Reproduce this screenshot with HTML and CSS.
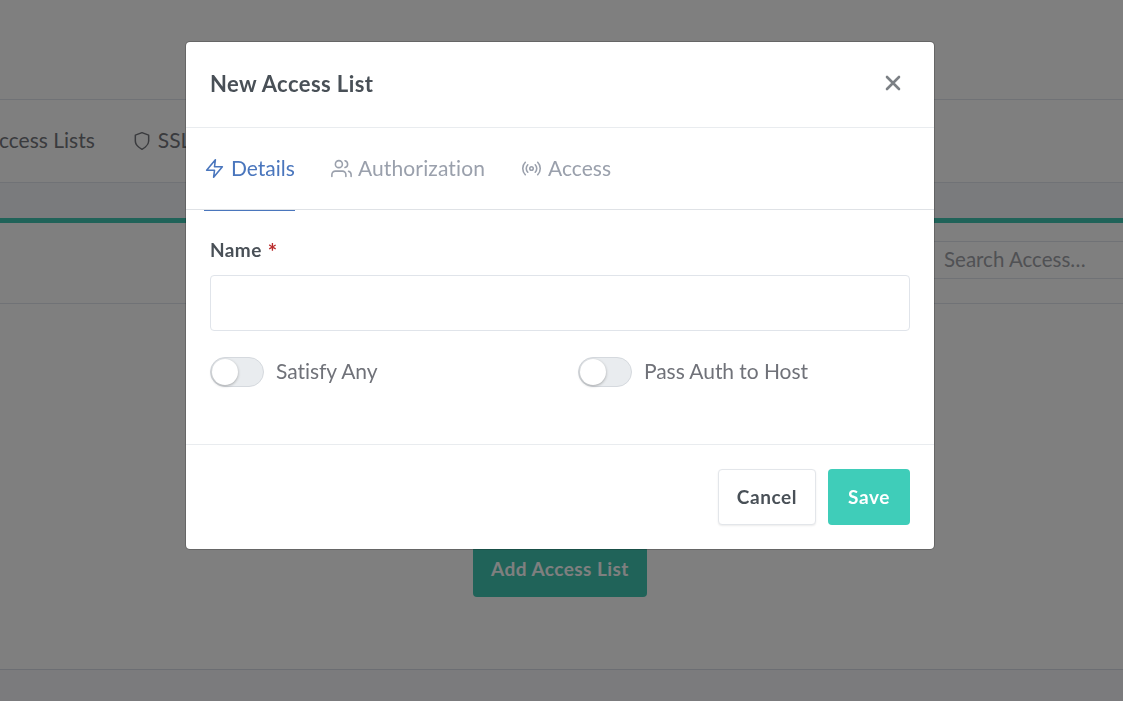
FILE: index.html
```html
<!DOCTYPE html>
<html lang="en">
<head>
<meta charset="utf-8">
<title>Access Lists</title>
<link rel="stylesheet" href="styles.css">
</head>
<body>
<div class="page">
  <header class="topbar"></header>
  <nav class="nav">
    <span class="nav-item nav-access">Access Lists</span>
    <span class="nav-item">
      <svg class="nav-icon" viewBox="0 0 24 24"><path d="M12 22s8-4 8-10V5l-8-3-8 3v7c0 6 8 10 8 10z"/></svg>
      SSL Certificates
    </span>
  </nav>
  <main class="content">
    <section class="card">
      <div class="card-head">
        <div class="search">Search Access…</div>
      </div>
      <div class="card-body">
        <span class="add-btn">Add Access List</span>
      </div>
    </section>
  </main>
  <footer class="footer"></footer>
</div>

<div class="backdrop">
  <div class="modal">
    <div class="modal-head">
      <h2 class="modal-title">New Access List</h2>
      <svg class="close" viewBox="0 0 24 24"><path d="M18 6 6 18M6 6l12 12"/></svg>
    </div>
    <div class="tabs">
      <div class="tab tab-active">
        <svg class="tab-icon" viewBox="0 0 24 24"><polygon points="13 2 3 14 12 14 11 22 21 10 12 10 13 2"/></svg>
        Details
      </div>
      <div class="tab tab-auth">
        <svg class="tab-icon" viewBox="0 0 24 24"><path d="M17 21v-2a4 4 0 0 0-4-4H5a4 4 0 0 0-4 4v2"/><circle cx="9" cy="7" r="4"/><path d="M23 21v-2a4 4 0 0 0-3-3.87"/><path d="M16 3.13a4 4 0 0 1 0 7.75"/></svg>
        Authorization
      </div>
      <div class="tab">
        <svg class="tab-icon" viewBox="0 0 24 24"><circle cx="12" cy="12" r="2"/><path d="M16.24 7.76a6 6 0 0 1 0 8.49m-8.48-.01a6 6 0 0 1 0-8.49m11.31-2.82a10 10 0 0 1 0 14.14m-14.14 0a10 10 0 0 1 0-14.14"/></svg>
        Access
      </div>
    </div>
    <div class="modal-body">
      <label class="field-label">Name <span class="req">*</span></label>
      <div class="input"></div>
      <div class="toggles">
        <div class="toggle-row"><span class="switch"><span class="knob"></span></span><span class="toggle-text">Satisfy Any</span></div>
        <div class="toggle-row"><span class="switch"><span class="knob"></span></span><span class="toggle-text">Pass Auth to Host</span></div>
      </div>
    </div>
    <div class="modal-foot">
      <span class="btn btn-cancel">Cancel</span>
      <span class="btn btn-save">Save</span>
    </div>
  </div>
</div>
</body>
</html>
```

FILE: styles.css
```css
* { box-sizing: border-box; }
html, body { margin: 0; height: 100%; overflow: hidden; }
body {
  font-family: "Lato", "Liberation Sans", sans-serif;
  color: #495057;
  background: #f5f7fb;
}
.page { display: flex; flex-direction: column; height: 701px; }
.topbar { height: 100px; background: #fff; border-bottom: 1px solid rgba(0,40,100,.12); }
.nav {
  height: 83px;
  background: #fff;
  border-bottom: 1px solid rgba(0,40,100,.12);
  display: flex;
  align-items: center;
  gap: 37px;
  margin-left: -15px;
  padding-bottom: 3px;
  font-size: 21px;
  color: #74767c;
  white-space: nowrap;
}
.nav-item { display: flex; align-items: center; gap: 6px; }
.nav-icon { width: 20px; height: 20px; margin-top: 2px; fill: none; stroke: currentColor; stroke-width: 1.8; stroke-linecap: round; stroke-linejoin: round; }
.content { flex: 1; padding-top: 35px; display: flex; }
.card {
  width: 100%;
  height: 451px;
  background: #fff;
  border-top: 5px solid #40c6b2;
  display: flex;
  flex-direction: column;
}
.card-head {
  height: 81px;
  border-bottom: 1px solid rgba(0,40,100,.12);
  display: flex;
  align-items: flex-start;
  justify-content: flex-end;
  padding-top: 18px;
}
.search {
  width: 189px;
  height: 38px;
  padding: 0 10px;
  border-top: 1px solid rgba(0,40,100,.12);
  border-bottom: 1px solid rgba(0,40,100,.12);
  font-size: 20.5px;
  line-height: 35px;
  color: #a0a2a8;
  white-space: nowrap;
}
.card-body { flex: 1; display: flex; justify-content: center; padding: 242px 3px 0 0; }
.add-btn {
  width: 174px;
  height: 51px;
  border-radius: 4px;
  background: #40c6b2;
  color: #fff;
  font-weight: 700;
  font-size: 19px;
  letter-spacing: .45px;
  line-height: 46px;
  text-align: center;
}
.footer { height: 32px; background: #f6f6fa; border-top: 1px solid rgba(0,40,100,.12); }

.backdrop {
  position: fixed;
  inset: 0;
  background: rgba(0,0,0,.5);
  display: flex;
  justify-content: center;
  align-items: flex-start;
  padding: 41px 3px 0 0;
}
.modal {
  width: 750px;
  height: 509px;
  background: #fff;
  border: 1px solid rgba(0,0,0,.2);
  border-radius: 5px;
  background-clip: padding-box;
  display: flex;
  flex-direction: column;
}
.modal-head {
  height: 86px;
  border-bottom: 1px solid #e9ecef;
  display: flex;
  align-items: center;
  justify-content: space-between;
  padding: 0 29px 3px 24px;
}
.modal-title { margin: 0; font-size: 22px; font-weight: 700; letter-spacing: .42px; color: #495057; }
.close { width: 24px; height: 24px; fill: none; stroke: #7c8085; stroke-width: 2.6; stroke-linecap: round; }
.tabs {
  height: 82px;
  border-bottom: 1px solid #dfe2e6;
  display: flex;
  gap: 36px;
  padding-left: 18px;
}
.tab {
  height: 83px;
  display: flex;
  align-items: center;
  gap: 6px;
  font-size: 21px;
  color: #9aa0ac;
  padding-bottom: 4px;
  border-bottom: 1px solid transparent;
}
.tab-auth { letter-spacing: .13px; }
.tab-active { color: #4a76bd; border-bottom-color: #4a76bd; }
.tab-icon { width: 21px; height: 21px; margin-top: 3px; fill: none; stroke: currentColor; stroke-width: 1.8; stroke-linecap: round; stroke-linejoin: round; }
.modal-body { height: 234px; padding: 26px 24px 0; }
.field-label { display: block; font-size: 19px; font-weight: 700; letter-spacing: .4px; line-height: 28px; color: #495057; }
.req { color: #b92c2c; font-size: 22px; line-height: 20px; vertical-align: -3px; margin-left: 1px; }
.input {
  height: 56px;
  margin-top: 11px;
  border: 1px solid #e0e4ea;
  border-radius: 4px;
  background: #fff;
}
.toggles { display: grid; grid-template-columns: 1fr 1fr; gap: 36px; margin-top: 26px; }
.toggle-row { display: flex; align-items: center; gap: 12px; }
.switch {
  width: 54px;
  height: 30px;
  border-radius: 15px;
  background: #e9ecef;
  border: 1px solid #d5d9de;
  padding: 1px;
  display: block;
}
.knob {
  display: block;
  width: 26px;
  height: 26px;
  border-radius: 50%;
  background: #fff;
  box-shadow: 0 1px 3px rgba(0,0,0,.3);
}
.toggle-text { font-size: 21px; letter-spacing: -.05px; color: #707279; padding-bottom: 4px; }
.modal-foot {
  flex: 1;
  border-top: 1px solid #e9ecef;
  display: flex;
  justify-content: flex-end;
  gap: 12px;
  padding: 24px 24px 0;
}
.btn {
  height: 56px;
  border-radius: 4px;
  font-size: 19px;
  font-weight: 700;
  letter-spacing: .6px;
  line-height: 55px;
  text-align: center;
}
.btn-cancel { width: 98px; background: #fff; border: 1px solid #e3e6ea; box-shadow: 0 1px 2px rgba(0,0,0,.08); color: #495057; line-height: 54px; }
.btn-save { width: 82px; background: #3fcdb9; color: #fff; }
```
